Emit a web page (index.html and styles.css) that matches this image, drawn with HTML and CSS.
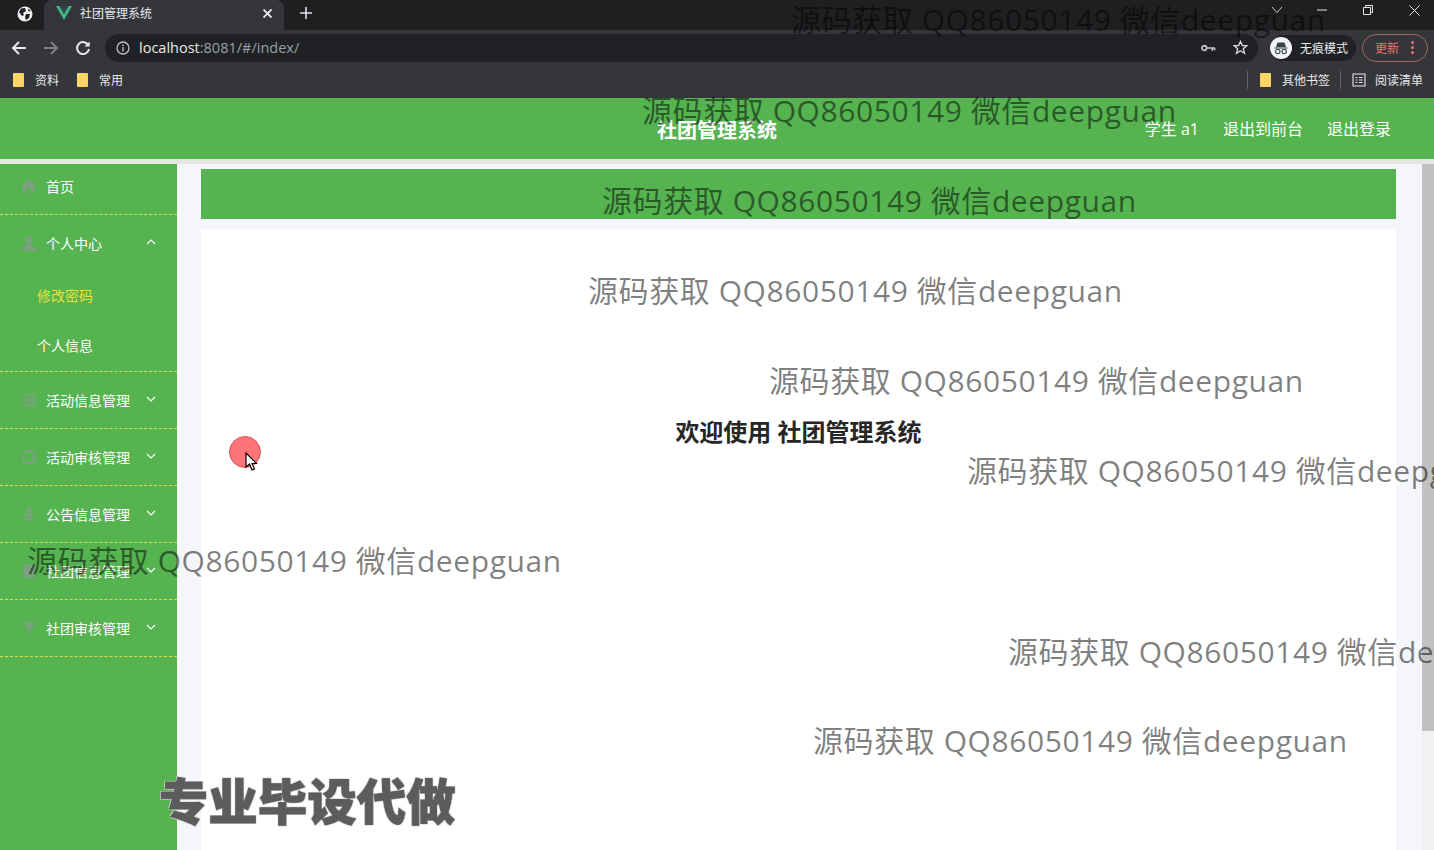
FILE: index.html
```html
<!DOCTYPE html>
<html>
  <head>
    <title>社团管理系统</title>
    <link rel="stylesheet" href="styles.css">
  </head>
  <body class="body">
    <div class="tabstrip">
      <div class="tab-group">
        <svg class="globe" viewBox="0 0 16 16" width="16" height="16"><circle cx="8" cy="8" r="7.5" fill="#f1f3f4"/><path d="M4 2.5 L8 2 L9 5 L6 7 L7 9 L5 10 L2 6Z M9 8 L13 8 L12 12 L9 14 L8 11Z M11 2.5 L14 5 L11.5 5.5Z" fill="#202124"/></svg>
      </div>
      <div class="tab">
        <svg class="vue" viewBox="0 0 16 14" width="16" height="14"><path d="M0 0 H3.4 L8 8 L12.6 0 H16 L8 14Z" fill="#41b883"/><path d="M3.4 0 H6 L8 3.6 L10 0 H12.6 L8 8Z" fill="#35495e"/></svg>
        <span class="tab-title">社团管理系统</span>
        <svg viewBox="0 0 9 9" width="9" height="9"><path d="M0.5 0.5L8.5 8.5M8.5 0.5L0.5 8.5" stroke="#f1f3f4" stroke-width="1.7"/></svg>
      </div>
      <svg class="plus" viewBox="0 0 12 12" width="12" height="12"><path d="M6 0V12M0 6H12" stroke="#dee1e6" stroke-width="1.6"/></svg>
      <div class="win-btns">
        <svg viewBox="0 0 12 8" width="12" height="8"><path d="M1 1L6 6.5L11 1" fill="none" stroke="#c8c8c8"/></svg>
        <svg class="win-min" viewBox="0 0 10 2" width="10" height="2"><path d="M0 1H10" stroke="#e8e8e8"/></svg>
        <svg class="win-max" viewBox="0 0 10 10" width="10" height="10"><path d="M0.5 2.5H7.5V9.5H0.5ZM2.5 2.5V0.5H9.5V7.5H7.5" fill="none" stroke="#e8e8e8"/></svg>
        <svg class="win-close" viewBox="0 0 11 11" width="11" height="11"><path d="M0.5 0.5L10.5 10.5M10.5 0.5L0.5 10.5" stroke="#e8e8e8"/></svg>
      </div>
    </div>

    <div class="toolbar">
      <svg class="nav-ico" viewBox="0 0 16 16" width="16" height="16"><path d="M15 8H2M8 2L2 8L8 14" fill="none" stroke="#e8eaed" stroke-width="2"/></svg>
      <svg class="nav-ico" viewBox="0 0 16 16" width="16" height="16"><path d="M1 8H14M8 2L14 8L8 14" fill="none" stroke="#7d8084" stroke-width="2"/></svg>
      <svg class="nav-ico" viewBox="0 0 16 16" width="16" height="16"><path d="M13.5 5.5A6 6 0 1 0 14 9" fill="none" stroke="#e8eaed" stroke-width="2"/><path d="M14.6 1.5V6.6H9.5Z" fill="#e8eaed"/></svg>
      <div class="omnibox">
        <svg viewBox="0 0 14 14" width="14" height="14"><circle cx="7" cy="7" r="6" fill="none" stroke="#bdc1c6" stroke-width="1.3"/><path d="M7 6V10.5M7 3.4V5" stroke="#bdc1c6" stroke-width="1.4"/></svg>
        <span class="url"><b>localhost</b>:8081/#/index/</span>
        <svg class="key" viewBox="0 0 16 8" width="15" height="8"><circle cx="3.5" cy="4" r="2.5" fill="none" stroke="#c4c7c5" stroke-width="1.8"/><path d="M6 4H15M12 4V7M14.5 4V6.5" stroke="#c4c7c5" stroke-width="1.8"/></svg>
        <svg class="star" viewBox="0 0 16 16" width="15" height="15"><path d="M8 1.5L10 6H14.8L11 9.2L12.3 14.2L8 11.5L3.7 14.2L5 9.2L1.2 6H6Z" fill="none" stroke="#d5d8da" stroke-width="1.4"/></svg>
      </div>
      <div class="incognito">
        <svg viewBox="0 0 22 22" width="22" height="22"><circle cx="11" cy="11" r="11" fill="#f1f3f4"/><path d="M6 10L7.5 5.5H14.5L16 10ZM4.5 10.6H17.5V11.6H4.5Z" fill="#3c4043"/><circle cx="7.8" cy="14.5" r="2.2" fill="none" stroke="#3c4043" stroke-width="1.1"/><circle cx="14.2" cy="14.5" r="2.2" fill="none" stroke="#3c4043" stroke-width="1.1"/></svg>
        <span>无痕模式</span>
      </div>
      <div class="update">
        <span>更新</span>
        <span class="dots"><i></i><i></i><i></i></span>
      </div>
    </div>

    <div class="bookmarks">
      <div class="bm"><i class="folder"></i><span>资料</span></div>
      <div class="bm"><i class="folder"></i><span>常用</span></div>
      <div class="bm-right">
        <div class="bm"><i class="folder"></i><span>其他书签</span></div>
        <div class="bm bm-read">
          <svg viewBox="0 0 14 14" width="14" height="14"><path d="M1 1H13V13H1ZM3.5 4.5H5.5M7 4.5H10.5M3.5 7H5.5M7 7H10.5M3.5 9.5H5.5M7 9.5H10.5" fill="none" stroke="#e8eaed" stroke-width="1.1"/></svg>
          <span>阅读清单</span>
        </div>
      </div>
    </div>

    <div class="app">
      <header class="topbar">
        <div class="brand">社团管理系统</div>
        <div class="top-links">
          <span>学生 a1</span>
          <span>退出到前台</span>
          <span>退出登录</span>
        </div>
      </header>
      <div class="layout">
        <aside class="sidebar">
          <div class="menu-item menu-first">
            <svg class="menu-ico" viewBox="0 0 14 14"><path d="M7 1L14 7H12V13H8.5V9H5.5V13H2V7H0Z"/></svg>
            <span>首页</span>
          </div>
          <div class="menu-group">
            <div class="menu-item menu-open">
              <svg class="menu-ico" viewBox="0 0 14 14"><circle cx="7" cy="4" r="3.2"/><path d="M1 14C1 9 4 8 7 8S13 9 13 14Z"/></svg>
              <span>个人中心</span>
              <svg class="arrow" viewBox="0 0 10 6"><path d="M1 5L5 1L9 5"/></svg>
            </div>
            <div class="sub-item sub-active">修改密码</div>
            <div class="sub-item">个人信息</div>
          </div>
          <div class="menu-item">
            <svg class="menu-ico" viewBox="0 0 14 14"><path d="M1 2H13V4H1ZM1 6H13V8H1ZM1 10H13V12H1Z"/></svg>
            <span>活动信息管理</span>
            <svg class="arrow" viewBox="0 0 10 6"><path d="M1 1L5 5L9 1"/></svg>
          </div>
          <div class="menu-item">
            <svg class="menu-ico" viewBox="0 0 14 14"><path d="M7 0.5A6.5 6.5 0 1 0 7 13.5A6.5 6.5 0 1 0 7 0.5ZM7 2.5A4.5 4.5 0 1 1 7 11.5A4.5 4.5 0 1 1 7 2.5Z"/></svg>
            <span>活动审核管理</span>
            <svg class="arrow" viewBox="0 0 10 6"><path d="M1 1L5 5L9 1"/></svg>
          </div>
          <div class="menu-item">
            <svg class="menu-ico" viewBox="0 0 14 14"><path d="M5 1H9V5H5ZM4 6H10V9H4ZM3 10H11V13H3Z"/></svg>
            <span>公告信息管理</span>
            <svg class="arrow" viewBox="0 0 10 6"><path d="M1 1L5 5L9 1"/></svg>
          </div>
          <div class="menu-item">
            <svg class="menu-ico" viewBox="0 0 14 14"><path d="M2 1H12V13H2Z"/></svg>
            <span>社团信息管理</span>
            <svg class="arrow" viewBox="0 0 10 6"><path d="M1 1L5 5L9 1"/></svg>
          </div>
          <div class="menu-item">
            <svg class="menu-ico" viewBox="0 0 14 14"><path d="M1 2H13L8 8V13H6V8Z"/></svg>
            <span>社团审核管理</span>
            <svg class="arrow" viewBox="0 0 10 6"><path d="M1 1L5 5L9 1"/></svg>
          </div>
        </aside>
        <main class="main">
          <div class="crumb"></div>
          <div class="card">
            <h1 class="welcome">欢迎使用 社团管理系统</h1>
          </div>
        </main>
        <div class="scrollbar"><div class="thumb"></div></div>
      </div>
    </div>

    <!-- cursor highlight and video overlay -->
    <div class="click-dot"></div>
    <svg class="cursor" viewBox="0 0 13 20" width="13" height="20"><path d="M1 1V15L4.5 12L7 18L9.5 17L7 11.5H11.5Z" fill="#fff" stroke="#000" stroke-width="1.2"/></svg>

    <div class="mark m1">源码获取 QQ86050149 微信deepguan</div>
    <div class="mark m2">源码获取 QQ86050149 微信deepguan</div>
    <div class="mark m3">源码获取 QQ86050149 微信deepguan</div>
    <div class="mark m4">源码获取 QQ86050149 微信deepguan</div>
    <div class="mark m5">源码获取 QQ86050149 微信deepguan</div>
    <div class="mark m6">源码获取 QQ86050149 微信deepguan</div>
    <div class="mark m7">源码获取 QQ86050149 微信deepguan</div>
    <div class="mark m8">源码获取 QQ86050149 微信deepguan</div>
    <div class="mark m9">源码获取 QQ86050149 微信deepguan</div>
    <div class="promo">专业毕设代做</div>
  </body>
</html>
```

FILE: styles.css
```css
* {
  box-sizing: border-box;
}
html, body {
  margin: 0;
  height: 100%;
}
.body {
  width: 1434px;
  height: 850px;
  overflow: hidden;
  position: relative;
  display: flex;
  flex-direction: column;
  font-family: "Open Sans", "Noto Sans CJK SC", sans-serif;
  background: #fff;
}

/* browser chrome */
.tabstrip {
  height: 30px;
  background: #1e1f21;
  display: flex;
  align-items: flex-start;
  flex: none;
}
.tab-group {
  width: 44px;
  height: 29px;
  display: flex;
  justify-content: center;
  align-items: center;
  padding-left: 6px;
  padding-bottom: 2px;
}
.tab {
  width: 240px;
  height: 30px;
  background: #35363a;
  border-radius: 8px 8px 0 0;
  display: flex;
  align-items: center;
  padding: 0 12px 4px 12px;
  color: #e8eaed;
  font-size: 12px;
}
.tab-title {
  margin-left: 8px;
  flex: 1;
}
.plus {
  margin: 7px 0 0 16px;
}
.win-btns {
  margin-left: auto;
  display: flex;
  align-items: center;
  height: 20px;
  padding-right: 14px;
}
.win-min {
  margin-left: 34px;
}
.win-max {
  margin-left: 36px;
}
.win-close {
  margin-left: 36px;
}

.toolbar {
  height: 35px;
  background: #35363a;
  display: flex;
  align-items: center;
  flex: none;
  padding-left: 11px;
  gap: 16px;
}
.omnibox {
  width: 1153px;
  height: 28px;
  margin-left: -2px;
  border-radius: 14px;
  background: #202124;
  display: flex;
  align-items: center;
  padding: 0 10px 0 11px;
  color: #9aa0a6;
}
.url {
  margin-left: 9px;
  font-size: 14.5px;
}
.url b {
  font-weight: 400;
  color: #e8eaed;
}
.key {
  margin-left: auto;
}
.star {
  margin-left: 17px;
}
.incognito {
  margin-left: -4px;
  width: 86px;
  height: 26px;
  border-radius: 13px;
  background: #202124;
  color: #e8eaed;
  font-size: 12px;
  display: flex;
  align-items: center;
  gap: 8px;
}
.update {
  margin-left: -10px;
  width: 66px;
  height: 28px;
  border: 1px solid #a8675f;
  border-radius: 14px;
  color: #e8776c;
  font-size: 12px;
  display: flex;
  align-items: center;
  padding-left: 12px;
}
.dots {
  margin-left: 12px;
  display: flex;
  flex-direction: column;
  gap: 2px;
}
.dots i {
  width: 3px;
  height: 3px;
  border-radius: 50%;
  background: #e8776c;
}

.bookmarks {
  height: 33px;
  background: #35363a;
  display: flex;
  align-items: center;
  padding-left: 13px;
  gap: 18px;
  color: #e8eaed;
  font-size: 12px;
  flex: none;
  padding-bottom: 3px;
}
.bm {
  display: flex;
  align-items: center;
  gap: 11px;
}
.folder {
  width: 11px;
  height: 14px;
  background: #fdd663;
  display: block;
  border-radius: 1px;
}
.bm-right {
  margin-left: auto;
  display: flex;
  align-items: center;
  padding-left: 12px;
  border-left: 1px solid #5f6368;
  padding-right: 11px;
}
.bm-read {
  margin-left: 10px;
  padding-left: 11px;
  border-left: 1px solid #5f6368;
  gap: 9px;
}

/* the app itself */
.app {
  flex: 1;
  display: flex;
  flex-direction: column;
  min-height: 0;
  background: #e4e6e4;
}
.topbar {
  height: 61px;
  background: #55b350;
  position: relative;
  display: flex;
  justify-content: flex-end;
  align-items: center;
  flex: none;
  padding: 0 43px 0 0;
}
.brand {
  position: absolute;
  left: 0;
  right: 0;
  top: 19px;
  text-align: center;
  color: #fff;
  font-size: 20px;
  font-weight: 700;
  line-height: 28px;
}
.top-links {
  display: flex;
  gap: 24px;
  color: #fff;
  font-size: 16px;
  line-height: 22px;
}
.layout {
  flex: 1;
  display: flex;
  margin-top: 5px;
  min-height: 0;
}
.sidebar {
  width: 177px;
  background: #55b350;
  flex: none;
}
.menu-item {
  height: 57px;
  border-bottom: 1px dashed #d8e04a;
  display: flex;
  align-items: center;
  color: #fff;
  font-size: 14px;
  padding: 0 21px 0 21px;
  position: relative;
}
.menu-first {
  height: 51px;
  padding-bottom: 6px;
}
.menu-open {
  border-bottom: none;
  height: 56px;
}
.menu-group {
  border-bottom: 1px dashed #d8e04a;
}
.menu-ico {
  width: 16px;
  height: 16px;
  fill: #9a94a8;
  opacity: 0.55;
  margin-right: 9px;
  flex: none;
}
.arrow {
  width: 10px;
  height: 6px;
  fill: none;
  stroke: #fff;
  stroke-width: 1.1;
  margin-left: auto;
  margin-top: -3px;
}
.sub-item {
  height: 50px;
  display: flex;
  align-items: center;
  padding-left: 37px;
  padding-bottom: 2px;
  color: #fff;
  font-size: 14px;
}
.sub-active {
  color: #e6e23a;
}
.main {
  flex: 1;
  background: #f5f6fb;
  padding: 5px 26px 0 24px;
  min-width: 0;
}
.crumb {
  height: 50px;
  background: #55b350;
}
.card {
  background: #fff;
  height: 640px;
  margin-top: 10px;
  padding-top: 185px;
  text-align: center;
}
.welcome {
  margin: 0;
  font-size: 24px;
  line-height: 36px;
  font-weight: 700;
  color: #262626;
}
.scrollbar {
  width: 12px;
  background: #f1f1f1;
  flex: none;
}
.thumb {
  height: 567px;
  background: #c1c1c1;
}

/* overlays */
.click-dot {
  position: absolute;
  left: 229px;
  top: 436px;
  width: 32px;
  height: 32px;
  border-radius: 50%;
  background: #fc7378;
  border: 1px solid #d9565f;
}
.cursor {
  position: absolute;
  left: 245px;
  top: 452px;
}
.mark {
  position: absolute;
  white-space: nowrap;
  font-size: 30px;
  letter-spacing: 0.58px;
  line-height: 44px;
  color: rgba(0, 0, 0, 0.5);
}
.m1 { left: 791px; top: -2px; }
.m2 { left: 642px; top: 89px; }
.m3 { left: 602px; top: 179px; }
.m4 { left: 588px; top: 269px; }
.m5 { left: 769px; top: 359px; }
.m6 { left: 967px; top: 449px; }
.m7 { left: 27px; top: 539px; }
.m8 { left: 1008px; top: 630px; }
.m9 { left: 813px; top: 719px; }
.promo {
  position: absolute;
  left: 159px;
  top: 768px;
  font-size: 49px;
  letter-spacing: 0.5px;
  line-height: 66px;
  font-weight: 900;
  color: #5c5c5c;
  white-space: nowrap;
  -webkit-text-stroke: 1px #5c5c5c;
  text-shadow: 1px 1px 0 #ddd, -1px -1px 0 #ddd, 1px -1px 0 #ddd, -1px 1px 0 #ddd;
}
```
